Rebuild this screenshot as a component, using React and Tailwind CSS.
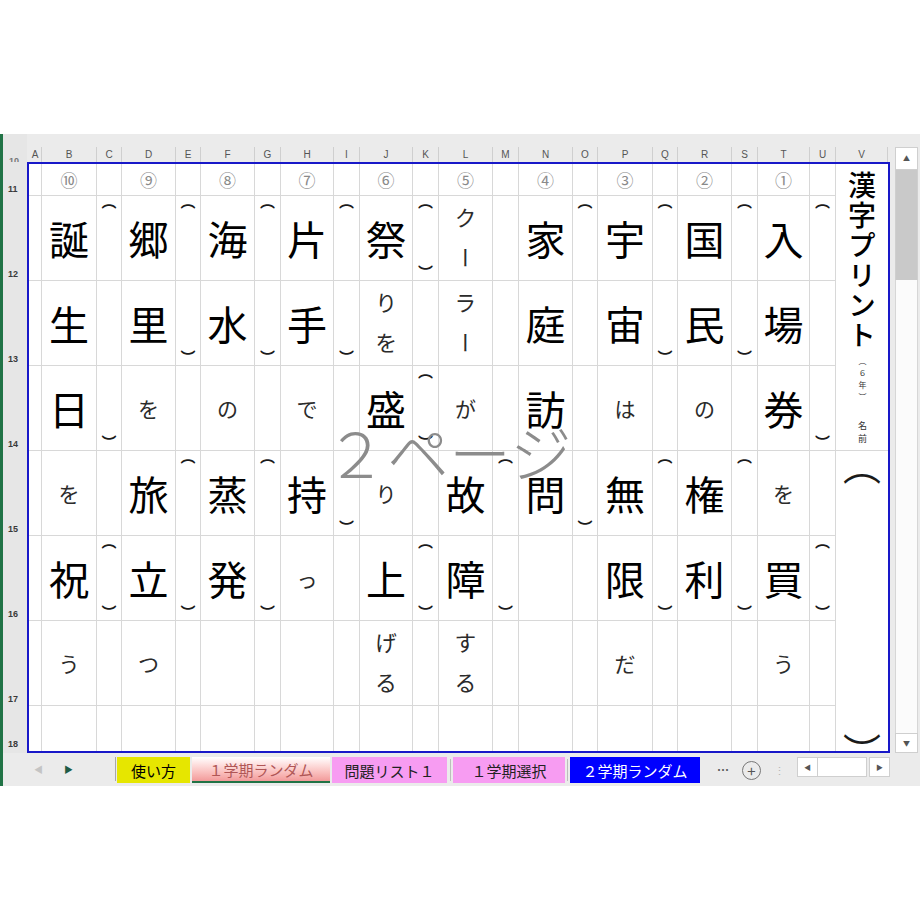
import React from "react";

const cols = ["A", "B", "C", "D", "E", "F", "G", "H", "I", "J", "K", "L", "M", "N", "O", "P", "Q", "R", "S", "T", "U"];
const rowLabels = ["11", "12", "13", "14", "15", "16", "17", "18"];
const rowHeights = ["h-[32px]", "h-[85px]", "h-[85px]", "h-[85px]", "h-[85px]", "h-[85px]", "h-[85px]", "h-[45px]"];

// 問題の言葉（縦書き、上から下へ）
const words = {
  B: ["⑩", "誕", "生", "日", "を", "祝", "う"],
  D: ["⑨", "郷", "里", "を", "旅", "立", "つ"],
  F: ["⑧", "海", "水", "の", "蒸", "発", ""],
  H: ["⑦", "片", "手", "で", "持", "っ", ""],
  J: ["⑥", "祭", "りを", "盛", "り", "上", "げる"],
  L: ["⑤", "クー", "ラー", "が", "故", "障", "する"],
  N: ["④", "家", "庭", "訪", "問", "", ""],
  P: ["③", "宇", "宙", "は", "無", "限", "だ"],
  R: ["②", "国", "民", "の", "権", "利", ""],
  T: ["①", "入", "場", "券", "を", "買", "う"],
};

// ふりがな欄のかっこ  o = ︵ (上) / c = ︶ (下)
const marks = {
  C: { 1: "o", 3: "c", 5: "oc" },
  E: { 1: "o", 2: "c", 4: "o", 5: "c" },
  G: { 1: "o", 2: "c", 4: "o", 5: "c" },
  I: { 1: "o", 2: "c", 4: "c" },
  K: { 1: "oc", 3: "oc", 5: "oc" },
  M: { 4: "o", 5: "c" },
  O: { 1: "o", 4: "c" },
  Q: { 1: "o", 2: "c", 4: "o", 5: "c" },
  S: { 1: "o", 2: "c", 4: "o", 5: "c" },
  U: { 1: "o", 3: "c", 5: "oc" },
};

const kana = /^[\u3040-\u30ff]+$/;

const WideText = ({ text, row }) => {
  if (!text) return null;
  if (row === 0) return <span className="text-[17px] leading-none text-[#8a8a8a]">{text}</span>;
  if (text.length === 2)
    return (
      <div className="flex flex-col items-center">
        {[...text].map((ch, i) => (
          <div key={i} className="flex h-[40px] items-center justify-center">
            <span className="[writing-mode:vertical-rl] text-[22px] leading-none text-[#2b2b2b]">{ch}</span>
          </div>
        ))}
      </div>
    );
  if (kana.test(text)) return <span className="text-[21px] leading-none text-[#2b2b2b]">{text}</span>;
  return <span className="text-[40px] leading-none text-black">{text}</span>;
};

const Marks = ({ m }) => (
  <div className="flex h-full flex-col items-center justify-between pb-[1px]">
    <span className={m.includes("o") ? "-mt-[3px] text-[15px] leading-[15px] font-bold text-[#1a1a1a]" : "invisible -mt-[3px] text-[15px] leading-[15px]"}>︵</span>
    <span className={m.includes("c") ? "text-[15px] leading-[15px] font-bold text-[#1a1a1a]" : "invisible text-[15px] leading-[15px]"}>︶</span>
  </div>
);

const Cell = ({ col, row }) => {
  const last = row === 7;
  const w = words[col];
  const mk = marks[col] && marks[col][row];
  return (
    <div className={last ? "border-r border-[#d8d8d8]" : "border-r border-b border-[#d8d8d8]"}>
      {w && (
        <div className="flex h-full items-center justify-center">
          <WideText text={w[row]} row={row} />
        </div>
      )}
      {mk && <Marks m={mk} />}
    </div>
  );
};

const Tab = ({ className, children }) => (
  <div className={"flex h-[26px] items-center justify-center text-[15px] leading-none " + className}>{children}</div>
);

export default function App() {
  return (
    <div className="h-[920px] w-[920px] overflow-hidden bg-white font-['Noto_Sans_CJK_JP',sans-serif]">
      <div className="h-[134px]" />
      <div className="flex h-[652px]">
        <div className="w-[3px] bg-[#217346]" />
        <div className="flex w-[917px] flex-col bg-[#ebebeb]">
          <div className="flex h-[619px]">
            {/* 行番号 */}
            <div className="flex w-[24px] flex-col bg-[#e6e6e6] font-['Liberation_Sans',sans-serif] text-[9px] font-bold text-[#3a3a3a]">
              <div className="h-[28px] overflow-hidden">
                <div className="mt-[23px] pl-[6px] leading-none text-[#777]">10</div>
              </div>
              <div className="h-[2px]" />
              {rowLabels.map((r, i) => (
                <div key={r} className={"flex items-end pb-[2px] pl-[5px] leading-none " + rowHeights[i]}>
                  {r}
                </div>
              ))}
            </div>

            {/* シート本体 */}
            <div className="flex w-[863px] flex-col">
              <div className="grid h-[28px] grid-cols-[13px_55px_25px_54px_25px_54px_26px_53px_26px_53px_26px_54px_26px_54px_25px_55px_25px_54px_26px_52px_26px_52px] px-[2px] font-['Liberation_Sans',sans-serif] text-[10px] text-[#555]">
                {[...cols, "V"].map((c) => (
                  <div key={c} className="flex items-end">
                    <div className="flex h-[15px] w-full items-center justify-center border-r border-[#cfcfcf] leading-none">{c}</div>
                  </div>
                ))}
              </div>
              <div className="relative h-[591px] border-2 border-[#1818c8] bg-white">
                <div className="grid grid-cols-[13px_55px_25px_54px_25px_54px_26px_53px_26px_53px_26px_54px_26px_54px_25px_55px_25px_54px_26px_52px_26px_52px] grid-rows-[32px_repeat(6,85px)_45px]">
                  {rowLabels.map((_, row) => (
                    <React.Fragment key={row}>
                      {cols.map((c) => (
                        <Cell key={c} col={c} row={row} />
                      ))}
                      {row === 0 && (
                        <div className="row-span-4 flex justify-center border-b border-[#d8d8d8] pt-[7px]">
                          <div className="[writing-mode:vertical-rl] text-[28px] leading-none font-medium tracking-[2px] text-black">
                            漢字プリント
                            <span className="ms-[6px] text-[8px] font-normal tracking-[4px] text-[#333]">（６年）</span>
                            <span className="ms-[16px] text-[9px] font-normal tracking-[4px] text-[#333]">名前</span>
                          </div>
                        </div>
                      )}
                      {row === 4 && (
                        <div className="row-span-4 flex flex-col items-center justify-between">
                          <span className="-mt-[6px] text-[38px] leading-[38px] text-[#1a1a1a]">︵</span>
                          <span className="-mb-[18px] text-[38px] leading-[38px] text-[#1a1a1a]">︶</span>
                        </div>
                      )}
                    </React.Fragment>
                  ))}
                </div>
                {/* 改ページプレビューの透かし */}
                <div className="pointer-events-none absolute top-[256px] left-[296px] whitespace-nowrap text-[62px] leading-none font-light text-[#8c8c8c]">
                  ２ページ
                </div>
              </div>
            </div>

            <div className="w-[5px]" />

            {/* 縦スクロールバー */}
            <div className="flex w-[23px] flex-col pt-[13px]">
              <div className="flex h-[23px] items-center justify-center border border-[#cfcfcf] bg-white text-[7px] text-[#555]">▲</div>
              <div className="h-[110px] border-x border-[#cfcfcf] bg-[#c9c9c9]" />
              <div className="flex-1 border-x border-[#d6d6d6] bg-[#fbfbfb]" />
              <div className="flex h-[20px] items-center justify-center border border-[#cfcfcf] bg-white text-[7px] text-[#555]">▼</div>
            </div>
            <div className="w-[2px]" />
          </div>

          {/* シート見出し */}
          <div className="flex h-[33px] items-start pt-[4px]">
            <div className="flex h-[26px] w-[112px] items-center text-[9px]">
              <span className="ml-[31px] text-[#c4c4c4]">◀</span>
              <span className="ml-[21px] text-[#1f5b45]">▶</span>
            </div>
            <div className="h-[24px] w-px bg-[#a8a8a8]" />
            <div className="w-[1px]" />
            <Tab className="w-[73px] bg-[#e6e600] text-black">使い方</Tab>
            <div className="w-[2px]" />
            <Tab className="w-[138px] border-b-2 border-[#217346] bg-gradient-to-b from-white to-[#f29a9a] text-[#b05656]">１学期ランダム</Tab>
            <div className="w-[2px]" />
            <Tab className="w-[115px] bg-[#f79cf2] text-[#222]">問題リスト１</Tab>
            <div className="flex h-[26px] w-[6px] items-center justify-center">
              <div className="h-[22px] w-px bg-[#bdbdbd]" />
            </div>
            <Tab className="w-[112px] bg-[#f79cf2] text-[#222]">１学期選択</Tab>
            <div className="flex h-[26px] w-[5px] items-center justify-center">
              <div className="h-[22px] w-px bg-[#bdbdbd]" />
            </div>
            <Tab className="w-[130px] bg-[#0000ff] text-white">２学期ランダム</Tab>
            <div className="ml-[17px] flex h-[26px] items-center text-[12px] font-bold tracking-[1px] text-[#555]">…</div>
            <div className="ml-[12px] flex h-[26px] items-center">
              <div className="flex h-[19px] w-[19px] items-center justify-center rounded-full border border-[#777] text-[15px] leading-none text-[#555]">+</div>
            </div>
            <div className="ml-[13px] flex h-[26px] items-center text-[11px] text-[#b5b5b5]">⋮</div>
            <div className="ml-[12px] flex h-[20px] w-[93px] items-stretch">
              <div className="flex w-[21px] items-center justify-center border border-[#cfcfcf] bg-white text-[7px] text-[#555]">◀</div>
              <div className="w-[49px] border-y border-r border-[#cfcfcf] bg-white" />
              <div className="w-[2px]" />
              <div className="flex w-[21px] items-center justify-center border border-[#cfcfcf] bg-white text-[7px] text-[#555]">▶</div>
            </div>
          </div>
        </div>
      </div>
    </div>
  );
}
